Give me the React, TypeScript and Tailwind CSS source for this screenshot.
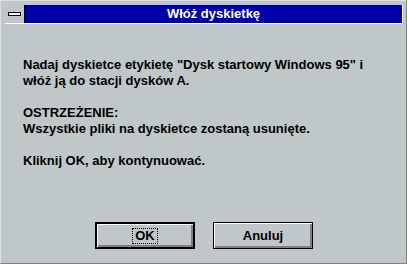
const font = { fontFamily: '"Liberation Sans", Arial, sans-serif' };

function Win31Button({ label, isDefault = false }: { label: string; isDefault?: boolean }) {
  return (
    <button
      className={`w-[100px] h-[27px] bg-[#c0c7c8] border-black flex items-center justify-center text-[13px] font-bold text-black shadow-[inset_1px_1px_0_#ffffff,inset_-2px_-2px_0_#808080] ${
        isDefault ? "border-2" : "border"
      }`}
    >
      {isDefault ? (
        <span className="border border-dotted border-black px-[2px] leading-[14px]">{label}</span>
      ) : (
        <span className="leading-[14px]">{label}</span>
      )}
    </button>
  );
}

export default function App() {
  return (
    <div
      className="w-[407px] h-[264px] bg-[#c0c7c8] border border-t-[#dfdfdf] border-l-[#dfdfdf] border-r-[#808080] border-b-[#808080] flex flex-col"
      style={font}
    >
      {/* Title bar */}
      <div className="mt-[4px] ml-[4px] mr-[3px] h-[19px] flex border-b border-r border-white">
        <div className="w-[20px] h-[18px] border-r border-black flex items-center justify-center">
          <div className="w-[13px] h-[4px] bg-white border border-black" />
        </div>
        <div className="flex-1 h-[18px] bg-[#0000a8] flex items-center justify-center text-white text-[13px] font-bold">
          Włóż dyskietkę
        </div>
      </div>

      {/* Message */}
      <div className="pl-[22px] pt-[33px] text-[13px] leading-[16px] font-bold text-black">
        <p>Nadaj dyskietce etykietę "Dysk startowy Windows 95" i</p>
        <p>włóż ją do stacji dysków A.</p>
        <p className="mt-[16px]">OSTRZEŻENIE:</p>
        <p>Wszystkie pliki na dyskietce zostaną usunięte.</p>
        <p className="mt-[16px]">Kliknij OK, aby kontynuować.</p>
      </div>

      {/* Buttons */}
      <div className="mt-auto mb-[14px] ml-[94px] flex gap-[18px]">
        <Win31Button label="OK" isDefault />
        <Win31Button label="Anuluj" />
      </div>
    </div>
  );
}
